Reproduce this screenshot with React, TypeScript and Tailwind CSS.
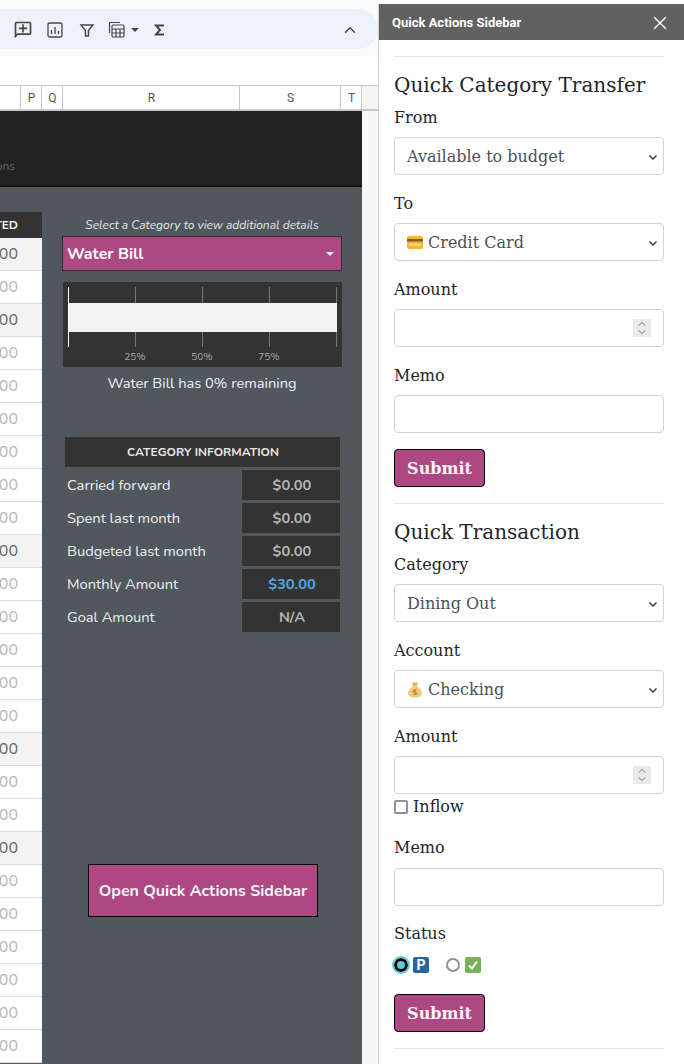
import { X, ChevronUp } from "lucide-react";

const darkRows = [0, 2, 9, 15, 18];
const rows = Array.from({ length: 25 }, (_, i) => i);

const infoRows = [
  { label: "Carried forward", value: "$0.00" },
  { label: "Spent last month", value: "$0.00" },
  { label: "Budgeted last month", value: "$0.00" },
  { label: "Monthly Amount", value: "$30.00", blue: true },
  { label: "Goal Amount", value: "N/A" },
];

const columns = [
  { name: "P", width: "w-[21px]" },
  { name: "Q", width: "w-[21px]" },
  { name: "R", width: "w-[177px]" },
  { name: "S", width: "w-[101px]" },
  { name: "T", width: "w-[21px]" },
];

function Toolbar() {
  return (
    <div className="h-[57px] bg-[#f9fbfd] pt-[9px]">
      <div className="flex h-[40px] items-center rounded-r-[20px] bg-[#edf2fa] pl-[13px] pr-[19px] pt-[2px] text-[#444746]">
        <svg width="20" height="20" viewBox="0 0 24 24" fill="currentColor" className="mr-[13px]">
          <path d="M20 2H4c-1.1 0-2 .9-2 2v18l4-4h14c1.1 0 2-.9 2-2V4c0-1.1-.9-2-2-2zm0 14H5.17L4 17.17V4h16v12zM13 5h-2v4H7v2h4v4h2v-4h4V9h-4z" />
        </svg>
        <svg width="18" height="18" viewBox="0 0 18 18" fill="none" stroke="currentColor" strokeWidth="1.3" className="mr-[15px]">
          <rect x="2" y="2" width="14" height="14" rx="1.5" />
          <path d="M5.5 13V9M9 13V6M12.5 13v-3" />
        </svg>
        <svg width="16" height="16" viewBox="0 0 16 16" fill="none" stroke="currentColor" strokeWidth="1.4" className="mr-[13px]">
          <path d="M2 3h12L9.5 8.5V14h-3V8.5z" />
        </svg>
        <svg width="18" height="18" viewBox="0 0 18 18" fill="none" stroke="currentColor" strokeWidth="1.2">
          <path d="M1.5 12V2.5a1 1 0 0 1 1-1H12" />
          <rect x="4" y="4" width="12" height="12" rx="1" />
          <path d="M4 8h12M4 12h12M8 8v8M12 8v8" />
        </svg>
        <svg width="8" height="4" viewBox="0 0 8 4" fill="currentColor" className="ml-[5px] mr-[15px]">
          <path d="M0 0h8L4 4z" />
        </svg>
        <svg width="12" height="12" viewBox="0 0 12 12" fill="none" stroke="currentColor" strokeWidth="2">
          <path d="M10 1.5H2l4 4.5-4 4.5h8" />
        </svg>
        <ChevronUp size={18} strokeWidth={2} className="ml-auto" />
      </div>
    </div>
  );
}

function ColumnHeaders() {
  return (
    <div className="flex h-[26px] border-t border-b-2 border-[#c7c7c7] bg-white text-[12px] text-[#575757] font-['Roboto',sans-serif]">
      <div className="w-[21px] border-r border-[#c7c7c7]" />
      {columns.map((col) => (
        <div key={col.name} className={`flex items-center justify-center border-r border-[#c7c7c7] pl-[1px] ${col.width}`}>
          {col.name}
        </div>
      ))}
      <div className="flex-1 bg-[#f5f5f5]" />
    </div>
  );
}

function CategoryPanel() {
  return (
    <div className="flex-1 pl-[20px] pr-[20px] pt-[30px]">
      <p className="text-center text-[12px] italic leading-[16px] text-[#e5e5e5]">
        Select a Category to view additional details
      </p>
      <div className="mt-[3px] flex h-[35px] items-center justify-between border border-[#333333] bg-[#ae4883] pl-[4px] pr-[7px] text-[16px] font-bold text-white">
        <span>Water Bill</span>
        <svg width="8" height="4" viewBox="0 0 8 4" fill="#ececec">
          <path d="M0 0h8L4 4z" />
        </svg>
      </div>
      <svg width="279" height="85" viewBox="0 0 279 85" className="ml-[1px] mt-[11px] block bg-[#333333]">
        <path d="M72.5 5v60M139.5 5v60M206.5 5v60M273.5 5v60" stroke="#777777" />
        <rect x="5" y="21" width="269" height="29" fill="#f1f1f1" />
        <path d="M5.5 5v60" stroke="#ffffff" />
        <g fill="#aaaaaa" fontSize="10" textAnchor="middle">
          <text x="72" y="78">25%</text>
          <text x="139" y="78">50%</text>
          <text x="206" y="78">75%</text>
        </g>
      </svg>
      <p className="mt-[7px] text-center text-[14.67px] leading-[18px] text-[#f1f1f1]">Water Bill has 0% remaining</p>
      <div className="ml-[3px] mr-[2px] mt-[45px]">
        <div className="flex h-[30px] items-center justify-center bg-[#333333] pl-[1px] text-[12px] font-bold text-[#e8e8e8]">
          CATEGORY INFORMATION
        </div>
        <div className="mt-[3px] flex flex-col gap-[3px]">
          {infoRows.map((row) => (
            <div key={row.label} className="flex h-[30px] items-center justify-between pl-[2px] text-[14.67px] text-[#f1f1f1]">
              <span>{row.label}</span>
              <span className={`flex h-[30px] w-[98px] items-center justify-center bg-[#333333] pl-[2px] font-bold ${row.blue ? "text-[#55a8e6]" : "text-[#b7b7b7]"}`}>
                {row.value}
              </span>
            </div>
          ))}
        </div>
      </div>
      <div className="ml-[26px] mr-[24px] mt-[232px] flex h-[53px] items-center justify-center border border-black bg-[#ae4883] text-[16px] font-bold text-[#f5f5f5]">
        Open Quick Actions Sidebar
      </div>
    </div>
  );
}

function Sheet() {
  return (
    <div className="flex h-[954px] overflow-hidden font-['Nunito','Lato',sans-serif]">
      <div className="w-[362px] shrink-0">
        <div className="flex h-[76px] items-end border-b-2 border-[#111111] bg-[#222222] pb-[11px] text-[12px] leading-[16px] text-[#666666]">
          <span className="w-[15px] overflow-hidden whitespace-nowrap text-right" dir="rtl">ons</span>
        </div>
        <div className="flex h-full bg-[#50585e]">
          <div className="w-[42px] shrink-0 pt-[25px]">
            <div className="flex h-[26px] items-center justify-end bg-[#333333] pr-[24px] text-[12px] font-bold text-[#f1f1f1]">
              <span className="w-[18px] overflow-hidden whitespace-nowrap text-right" dir="rtl">TED</span>
            </div>
            {rows.map((i) => (
              <div
                key={i}
                className={`flex h-[33px] items-center justify-end border-b border-[#dddddd] pr-[24px] text-[16px] ${
                  darkRows.includes(i) ? "bg-[#f3f3f3] text-[#666666]" : "bg-white text-[#b7b7b7]"
                }`}
              >
                00
              </div>
            ))}
          </div>
          <CategoryPanel />
        </div>
      </div>
      <div className="flex-1 bg-[#f8f8f8]" />
    </div>
  );
}

function Label({ children, tight }: { children: React.ReactNode; tight?: boolean }) {
  return <div className={`text-[16px] leading-[24px] ${tight ? "mb-[8px]" : "mb-[7px] pt-[1px]"}`}>{children}</div>;
}

function Select({ children }: { children: React.ReactNode }) {
  return (
    <div className="mb-[16px] flex h-[38px] items-center justify-between rounded-[4px] border border-[#ced4da] pl-[12px] pr-[5px] pt-[1px] text-[16px] text-[#495057]">
      <span className="flex items-center gap-[5px]">{children}</span>
      <svg width="10" height="10" viewBox="0 0 10 10" fill="none" stroke="#333333" strokeWidth="1.4">
        <path d="M1.5 3.5L5 7l3.5-3.5" />
      </svg>
    </div>
  );
}

function NumberInput({ className = "mb-[16px]" }: { className?: string }) {
  return (
    <div className={`relative h-[38px] rounded-[4px] border border-[#ced4da] ${className}`}>
      <div className="absolute right-[12px] top-[9px] h-[18px] w-[18px] bg-[#e9e9ed]">
        <svg width="18" height="18" viewBox="0 0 18 18" fill="none" stroke="#a5a5ad" strokeWidth="1.3">
          <path d="M5.5 6.5L9 3.5l3.5 3M5.5 11.5l3.5 3 3.5-3" />
        </svg>
      </div>
    </div>
  );
}

function TextInput() {
  return <div className="mb-[16px] h-[38px] rounded-[4px] border border-[#ced4da]" />;
}

function SubmitButton() {
  return (
    <div className="flex h-[38px] w-[91px] items-center justify-center rounded-[4px] border border-black bg-[#ae4883] pt-[1px] text-[16px] font-bold text-[#f5f5f5]">
      Submit
    </div>
  );
}

function CardIcon() {
  return (
    <svg width="16" height="13" viewBox="0 0 16 13">
      <rect x="0" y="0" width="16" height="13" rx="2" fill="#f5b335" />
      <rect x="0" y="3" width="16" height="2.5" fill="#8a5a1c" />
      <rect x="2" y="7.5" width="12" height="2" fill="#f8dc9a" />
    </svg>
  );
}

function MoneyBagIcon() {
  return (
    <svg width="16" height="16" viewBox="0 0 16 16">
      <path d="M5 0.5h6L9.7 4.5H6.3z" fill="#e0b060" />
      <path d="M6 4.5h4c3.2 2 5 4.6 5 6.8 0 2.8-2.8 4.2-7 4.2s-7-1.4-7-4.2c0-2.2 1.8-4.8 5-6.8z" fill="#f0c878" />
      <path d="M8 7v6M9.8 8.2H7.2a1 1 0 0 0 0 2.2h1.6a1 1 0 0 1 0 2H6.2" stroke="#a87c30" strokeWidth="0.9" fill="none" />
    </svg>
  );
}

function Sidebar() {
  return (
    <div className="mt-[4px] h-[1060px] w-[306px] overflow-hidden border-l border-[#d0d0d0] bg-white font-['DejaVu_Serif',serif] text-[#212529]">
      <div className="flex h-[36px] items-center justify-between bg-[#616161] pl-[13px] pr-[13px] pt-[1px] font-['Roboto',sans-serif] text-[13px] font-bold text-white">
        <span>Quick Actions Sidebar</span>
        <X size={22} strokeWidth={1.5} />
      </div>
      <div className="pl-[15px] pr-[20px]">
        <hr className="mt-[16px] border-t border-[#e2e4e7]" />
        <h2 className="mt-[16px] mb-[8px] text-[20px] leading-[24px]">Quick Category Transfer</h2>
        <Label>From</Label>
        <Select>Available to budget</Select>
        <Label>To</Label>
        <Select>
          <CardIcon />
          Credit Card
        </Select>
        <Label>Amount</Label>
        <NumberInput />
        <Label>Memo</Label>
        <TextInput />
        <SubmitButton />
        <hr className="mt-[16px] border-t border-[#e2e4e7]" />
        <h2 className="mt-[16px] mb-[8px] text-[20px] leading-[24px]">Quick Transaction</h2>
        <Label>Category</Label>
        <Select>Dining Out</Select>
        <Label>Account</Label>
        <Select>
          <MoneyBagIcon />
          Checking
        </Select>
        <Label>Amount</Label>
        <NumberInput className="mb-0" />
        <div className="mb-[15px] flex h-[26px] items-center gap-[5px] pb-[1px] text-[16px]">
          <span className="h-[14px] w-[14px] rounded-[2px] border-2 border-[#8f8f9d]" />
          Inflow
        </div>
        <div className="mb-[8px] pt-[1px] text-[16px] leading-[24px]">Memo</div>
        <TextInput />
        <Label tight>Status</Label>
        <div className="mb-[18px] flex h-[22px] items-center">
          <span className="flex h-[14px] w-[14px] items-center justify-center rounded-full border-[3px] border-black bg-[#5fc9d8] outline-2 outline-[#5fc9d8]" />
          <span className="ml-[5px] flex h-[16px] w-[16px] items-center justify-center rounded-[2px] bg-[#22669c] font-['Roboto',sans-serif] text-[14px] font-bold text-white">
            P
          </span>
          <span className="ml-[17px] h-[14px] w-[14px] rounded-full border-2 border-[#8f8f9d]" />
          <span className="ml-[5px] flex h-[16px] w-[16px] items-center justify-center rounded-[2px] bg-[#77b255]">
            <svg width="12" height="12" viewBox="0 0 12 12" fill="none" stroke="#ffffff" strokeWidth="2">
              <path d="M2 6.5l3 3 5-7" />
            </svg>
          </span>
        </div>
        <SubmitButton />
        <hr className="mt-[16px] border-t border-[#e2e4e7]" />
      </div>
    </div>
  );
}

export default function App() {
  return (
    <div className="flex h-[1064px] w-[684px] overflow-hidden bg-white">
      <div className="w-[378px] shrink-0">
        <Toolbar />
        <div className="h-[28px] bg-white" />
        <ColumnHeaders />
        <Sheet />
      </div>
      <Sidebar />
    </div>
  );
}
